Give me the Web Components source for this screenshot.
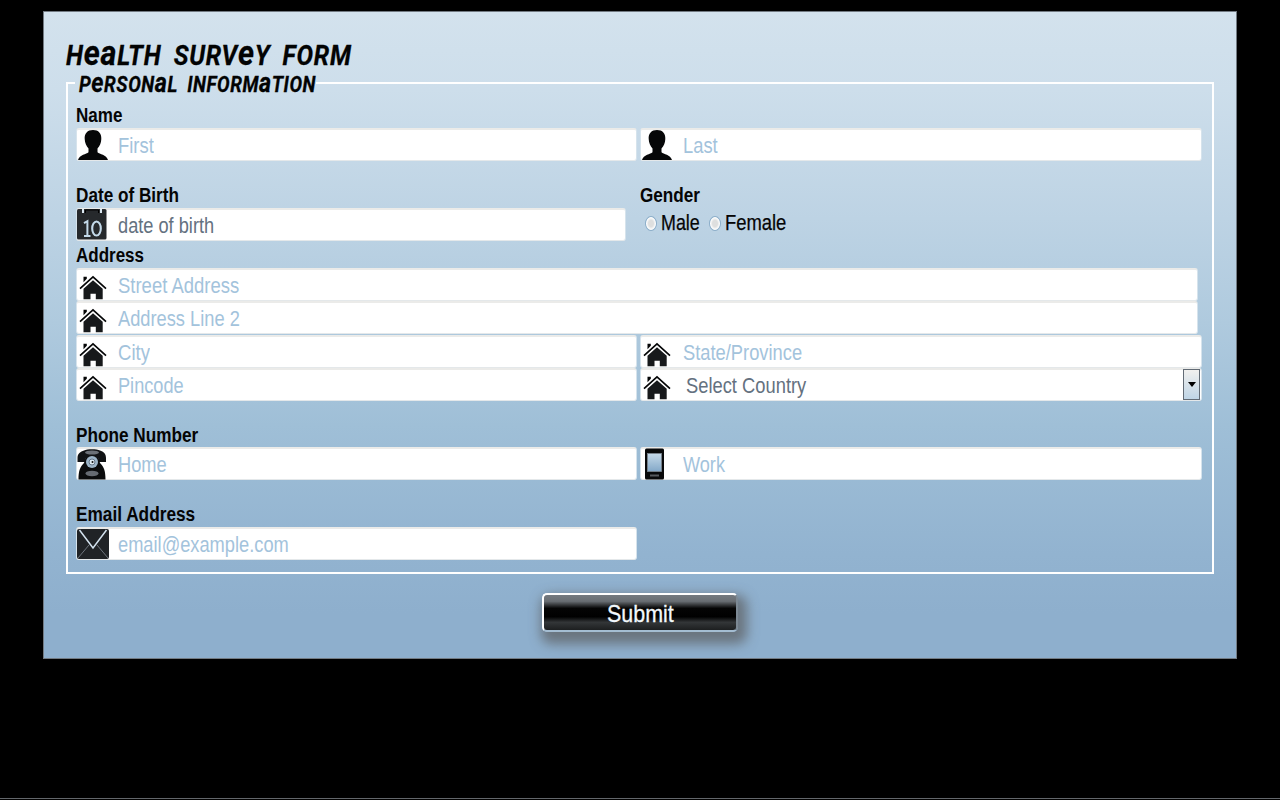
<!DOCTYPE html>
<html lang="en">
<head>
<meta charset="utf-8">
<title>Health Survey Form</title>
<style>
html,body{margin:0;height:100%;background:#000}
body{font-family:"Liberation Sans",Arial,sans-serif;overflow:hidden}
</style>
</head>
<body>
<health-survey></health-survey>
<script>
/* One line of text condensed to the width given in "w". */
class FitText extends HTMLElement{
  connectedCallback(){
    if(this.shadowRoot)return;
    const r=this.attachShadow({mode:'open'});
    r.innerHTML=`<style>:host{display:block;white-space:nowrap;flex:none}span{display:inline-block;transform-origin:0 50%}</style><span><slot></slot></span>`;
    const w=+this.getAttribute('w'),s=r.querySelector('span');
    this.style.width=w+'px';
    s.style.transform=`scaleX(${w/s.offsetWidth})`;
  }
}
const ICONS={
 user:`<path d="M17 1C11.500 1 8.300 4.400 8.700 10c.1 3.500 1.700 7.300 3.800 9.500v3.700C10.500 25.300 3.500 25.500 2 31h30c-1.500-5.500-8.500-5.700-10.500-7.800v-3.700C23.800 17.300 25.200 13.500 25.300 10 25.700 4.400 22.500 1 17 1Z" fill="#060708"/>`,
 house:`<g transform="translate(0 -.8)"><path d="M4 20.500 17 8.700 30 20.500" fill="none" stroke="#050607" stroke-width="1.700"/><path d="M7.500 8.500h3.300v2L7.500 14Z" fill="#050607"/><path d="M7.500 20.500 17 12l9.700 8.500V31h-6.900v-5.500h-5.300V31h-7Z" fill="#17191b"/></g>`,
 cal:`<g transform="translate(0 -1)"><rect x="1" y="1" width="29.500" height="30.500" rx="1.500" fill="#26292c"/><path d="M6 0h2v5H6ZM24 0h2v5H24Z" fill="#dce9f2"/><path d="M9.500 5V2h13v3" fill="none" stroke="#000"/><path d="M8 15.200l3.400-2V28M8 28h6.500" fill="none" stroke="#c3d9e9" stroke-width="2"/><ellipse cx="20.500" cy="20.500" rx="4.300" ry="7" fill="none" stroke="#c3d9e9" stroke-width="2.100"/></g>`,
 phone:`<path d="M8 2.500C11 .7 21 .7 24 2.500c3.500 1 6 3 6 7.500v4h-7.500V10.500h-13V14H1.500v-4C1.500 5.500 4.500 3.500 8 2.500Z" fill="#111315"/><path d="M9.500 10h13l1.500 5c4 4 5.500 8 5.500 16.500h-27C2.500 23 4 19 8 15Z" fill="#0b0c0d"/><ellipse cx="16" cy="4.500" rx="7" ry="2" fill="#6b7077"/><ellipse cx="16" cy="25.500" rx="6.500" ry="2.700" fill="#666b72"/><circle cx="16" cy="14" r="6" fill="#9cb4c8"/><circle cx="16" cy="14" r="3" fill="#dce9f2" stroke="#657688"/><circle cx="16.500" cy="14" r="1" fill="#111"/>`,
 mobile:`<defs><linearGradient id="g" x2="0" y2="1"><stop stop-color="#c5dae9"/><stop offset="1" stop-color="#83a8c8"/></linearGradient></defs><rect x="5" y=".5" width="19" height="31" rx="1.500" fill="#08090a"/><rect x="7.500" y="5.500" width="14" height="18" fill="url(#g)" stroke="#7d8790" stroke-width=".8"/><path d="M10 27.500h9" stroke="#55595d" stroke-width="2"/>`,
 mail:`<rect x="1" y="1" width="32" height="30" rx="2" fill="#202326"/><path d="M2 30 13 17M32 30 21 17" stroke="#6d747c" stroke-width="1"/><path d="M3.500 2 17 20 30.500 2" fill="none" stroke="#d3e2ee" stroke-width="1.500"/>`
};
/* White input box: icon, then the slotted text. */
class SurveyField extends HTMLElement{
  connectedCallback(){
    const i=this.getAttribute('icon'),sel=this.hasAttribute('select');
    this.attachShadow({mode:'open'}).innerHTML=`<style>
:host{display:flex;box-sizing:border-box;height:33px;background:#fff;border:1px solid #d6e3ec;border-top:2px solid #ebebe9;border-bottom-color:#e4e8ea;border-radius:3px;font-size:22px;line-height:32px;color:#a3c3dc}
:host([dark]){color:#64717f}
svg{width:34px;height:32px;margin:-1px 0 0 -1px;flex:none}
.t{margin-left:8px;flex:1}
:host([right]) .t{margin-left:9px}
:host([select]) .t{margin-left:12px}
.b{box-sizing:border-box;width:17px;height:31px;margin:-1px 1px 0 0;border:1px solid #626b75;background:linear-gradient(#f1f0ee,#bfd5e6);display:grid;place-items:center}
.b i{border:4px solid transparent;border-top:5px solid #000;border-bottom:0}
</style><svg viewBox="0 0 34 32">${ICONS[i]}</svg><div class="t"><slot></slot></div>${sel?'<div class="b"><i></i></div>':''}`;
  }
}
class SurveyLabel extends HTMLElement{
  connectedCallback(){
    this.attachShadow({mode:'open'}).innerHTML=`<style>:host{display:block;height:23px;font-weight:bold;font-size:20px;line-height:21px;color:#050505}</style><slot></slot>`;
  }
}
class SurveyRadio extends HTMLElement{
  connectedCallback(){
    this.attachShadow({mode:'open'}).innerHTML=`<style>:host{display:flex;align-items:center;font-size:22px;line-height:30px;color:#050505;-webkit-text-stroke:.25px #050505}
i{box-sizing:border-box;width:12px;height:15px;border-radius:50%;border:1px solid #8caec9;background:radial-gradient(#dedfdf 35%,#fff 65%);margin-right:4px}</style><i></i><slot></slot>`;
  }
}
/* Heading in unicase style: e and a are lower-case forms at cap height. */
class UnicaseTitle extends HTMLElement{
  connectedCallback(){
    const s=+this.getAttribute('size'),t=this.getAttribute('text').replace(/[ea]/g,'<b>$&</b>');
    this.attachShadow({mode:'open'}).innerHTML=`<style>:host{display:block;font:italic 700 ${s}px/1 Roboto,sans-serif;color:#020303;-webkit-text-stroke:.3px #020303}
fit-text{height:${s}px;line-height:${s}px;word-spacing:${s*.22}px;letter-spacing:.03em}b{font-size:1.24em;font-weight:700;line-height:0}</style><fit-text w="${this.getAttribute('w')}">${t}</fit-text>`;
  }
}
class SubmitButton extends HTMLElement{
  connectedCallback(){
    this.attachShadow({mode:'open'}).innerHTML=`<style>:host{box-sizing:border-box;display:flex;justify-content:center;width:196px;height:39px;border:2px solid #fff;border-right-color:#7c8994;border-bottom-color:#a4bdd2;border-radius:5px;font-size:24px;line-height:38px;color:#f2f8fc;-webkit-text-stroke:.3px #f2f8fc;background:linear-gradient(#747a80 0,#696e73 18%,#050505 38%,#000 62%,#333638 78%,#1d1f20 100%);box-shadow:4px 7px 12px 5px rgba(98,103,108,.8)}</style><slot></slot>`;
  }
}
class HealthSurvey extends HTMLElement{
  connectedCallback(){
    this.attachShadow({mode:'open'}).innerHTML=`<style>
:host{display:flex;flex-direction:column;box-sizing:border-box;height:800px;width:1280px;padding:11px 43px 1px;background:#000}
.panel{box-sizing:border-box;height:648px;width:1194px;border:1px solid #727a82;padding:30px 22px 0;background:linear-gradient(#d3e2ed 0,#cddeeb 12%,#bdd3e4 32%,#afcade 48%,#9fbfd7 64%,#92b3d0 84%,#8eafcd 93%)}
.set{box-sizing:border-box;width:1148px;height:492px;margin:12px 0 0;border:2.500px solid #fff;border-top:0;padding:0 0 0 8px;display:flex;flex-direction:column}
.legend{display:flex;align-items:flex-start;height:23px;margin-left:-10px}
.legend:before{content:"";width:9px;height:2px;background:#fff;flex:none}
.legend:after{content:"";flex:1;height:2px;background:#fff}
unicase-title.l{margin:-8px 0 0 4px}
.row{display:grid;grid-template-columns:561px 562px;column-gap:3px}
.gap{margin-top:24px}
.rad{display:flex;gap:9px;margin:0 0 0 5px}
.foot{display:flex;justify-content:center;padding-top:19px}
.rule{height:1px;margin:auto -43px 0;background:#63676b}
</style>
<div class="panel">
<unicase-title size="28" w="286" text="HeaLTH SURVeY FORM"></unicase-title>
<div class="set">
<div class="legend"><unicase-title class="l" size="21.500" w="237" text="PeRSONaL INFORMaTION"></unicase-title></div>
<survey-label><fit-text w="46">Name</fit-text></survey-label>
<div class="row"><survey-field icon="user"><fit-text w="36">First</fit-text></survey-field><survey-field right icon="user"><fit-text w="35">Last</fit-text></survey-field></div>
<div class="row gap"><div><survey-label><fit-text w="103">Date of Birth</fit-text></survey-label><survey-field icon="cal" dark style="width:550px"><fit-text w="96">date of birth</fit-text></survey-field></div>
<div><survey-label><fit-text w="60">Gender</fit-text></survey-label><div class="rad"><survey-radio><fit-text w="39">Male</fit-text></survey-radio><survey-radio><fit-text w="61">Female</fit-text></survey-radio></div></div></div>
<survey-label style="margin-top:4px"><fit-text w="68">Address</fit-text></survey-label>
<survey-field icon="house" style="width:1122px"><fit-text w="121">Street Address</fit-text></survey-field>
<survey-field icon="house" style="width:1122px"><fit-text w="122">Address Line 2</fit-text></survey-field>
<div class="row" style="margin-top:1px"><survey-field icon="house"><fit-text w="32">City</fit-text></survey-field><survey-field right icon="house"><fit-text w="119">State/Province</fit-text></survey-field></div>
<div class="row"><survey-field icon="house"><fit-text w="66">Pincode</fit-text></survey-field><survey-field right icon="house" select dark><fit-text w="120">Select Country</fit-text></survey-field></div>
<survey-label style="margin-top:24px"><fit-text w="122">Phone Number</fit-text></survey-label>
<div class="row" style="margin-top:-1px"><survey-field icon="phone"><fit-text w="49">Home</fit-text></survey-field><survey-field right icon="mobile"><fit-text w="42">Work</fit-text></survey-field></div>
<survey-label style="margin-top:24px"><fit-text w="119">Email Address</fit-text></survey-label>
<survey-field icon="mail" style="width:561px"><fit-text w="171">email@example.com</fit-text></survey-field>
</div>
<div class="foot"><submit-button><fit-text w="67">Submit</fit-text></submit-button></div>
</div>
<div class="rule"></div>`;
  }
}
customElements.define('survey-label',SurveyLabel);
customElements.define('survey-field',SurveyField);
customElements.define('survey-radio',SurveyRadio);
customElements.define('submit-button',SubmitButton);
customElements.define('unicase-title',UnicaseTitle);
customElements.define('health-survey',HealthSurvey);
customElements.define('fit-text',FitText);
</script>
</body>
</html>
